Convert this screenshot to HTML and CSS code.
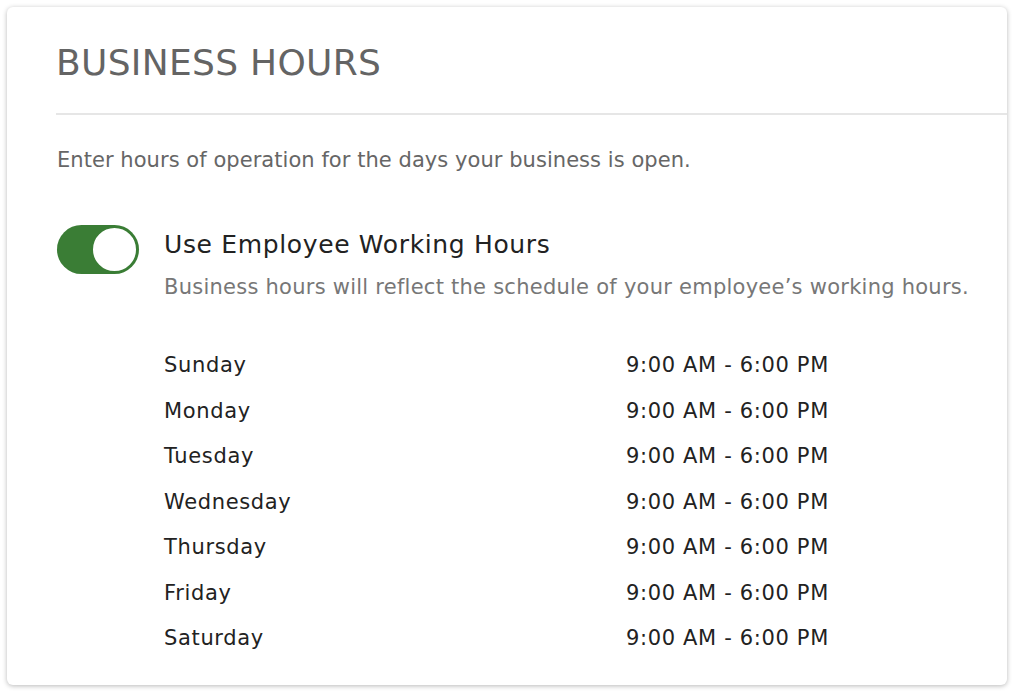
FILE: index.html
```html
<!DOCTYPE html>
<html>
<head>
<meta charset="utf-8">
<link rel="stylesheet" href="styles.css">
</head>
<body>
<div class="card">
  <div class="card-header"><h1 class="title">BUSINESS HOURS</h1></div>
  <div class="card-body">
    <p class="intro">Enter hours of operation for the days your business is open.</p>
    <div class="setting">
      <div class="toggle"><span class="knob"></span></div>
      <div class="setting-text">
        <div class="setting-title">Use Employee Working Hours</div>
        <div class="setting-desc">Business hours will reflect the schedule of your employee’s working hours.</div>
        <div class="hours">
          <span class="day">Sunday</span><span class="time">9:00 AM - 6:00 PM</span>
          <span class="day">Monday</span><span class="time">9:00 AM - 6:00 PM</span>
          <span class="day">Tuesday</span><span class="time">9:00 AM - 6:00 PM</span>
          <span class="day">Wednesday</span><span class="time">9:00 AM - 6:00 PM</span>
          <span class="day">Thursday</span><span class="time">9:00 AM - 6:00 PM</span>
          <span class="day">Friday</span><span class="time">9:00 AM - 6:00 PM</span>
          <span class="day">Saturday</span><span class="time">9:00 AM - 6:00 PM</span>
        </div>
      </div>
    </div>
  </div>
</div>
</body>
</html>
```
FILE: styles.css
```css
html, body { margin: 0; padding: 0; background: #fff; }
body { padding: 7px 8px 9px 7px; font-family: "DejaVu Sans", "Open Sans", sans-serif; }
.card {
  height: 678px;
  box-sizing: border-box;
  background: #fff;
  border-radius: 6px;
  box-shadow: 0 1px 5px rgba(0,0,0,0.28);
  overflow: hidden;
}
.card-header {
  margin-left: 49px;
  height: 108px;
  border-bottom: 2px solid #e6e6e6;
  box-sizing: border-box;
  padding-top: 34px;
}
.title {
  margin: 0;
  font-weight: 400;
  font-size: 36px;
  line-height: 44px;
  letter-spacing: 0.3px;
  color: #646464;
}
.card-body { padding: 0 0 0 50px; }
.intro {
  margin: 30px 0 0;
  font-size: 21px;
  line-height: 30px;
  letter-spacing: 0.05px;
  color: #666;
}
.setting { display: flex; margin-top: 50px; }
.toggle {
  width: 82px; height: 49px;
  border-radius: 25px;
  background: #3a7d35;
  position: relative;
  box-sizing: border-box;
  flex: none;
}
.knob {
  position: absolute;
  right: 1px; top: 1px;
  width: 47px; height: 47px;
  box-sizing: border-box;
  border-radius: 50%;
  background: #fff;
  border: 2px solid #3a7d35;
}
.setting-text { margin-left: 25px; padding-top: 5px; }
.setting-title { font-size: 25px; line-height: 30px; letter-spacing: 0.65px; color: #222; }
.setting-desc { font-size: 21px; line-height: 30px; letter-spacing: 0.25px; color: #777; margin-top: 12px; }
.hours {
  display: grid;
  grid-template-columns: 462px auto;
  grid-auto-rows: 45.5px;
  margin-top: 41px;
  font-size: 21px;
  letter-spacing: 0.65px;
  color: #222;
}
.day, .time { line-height: 45.5px; }
```
